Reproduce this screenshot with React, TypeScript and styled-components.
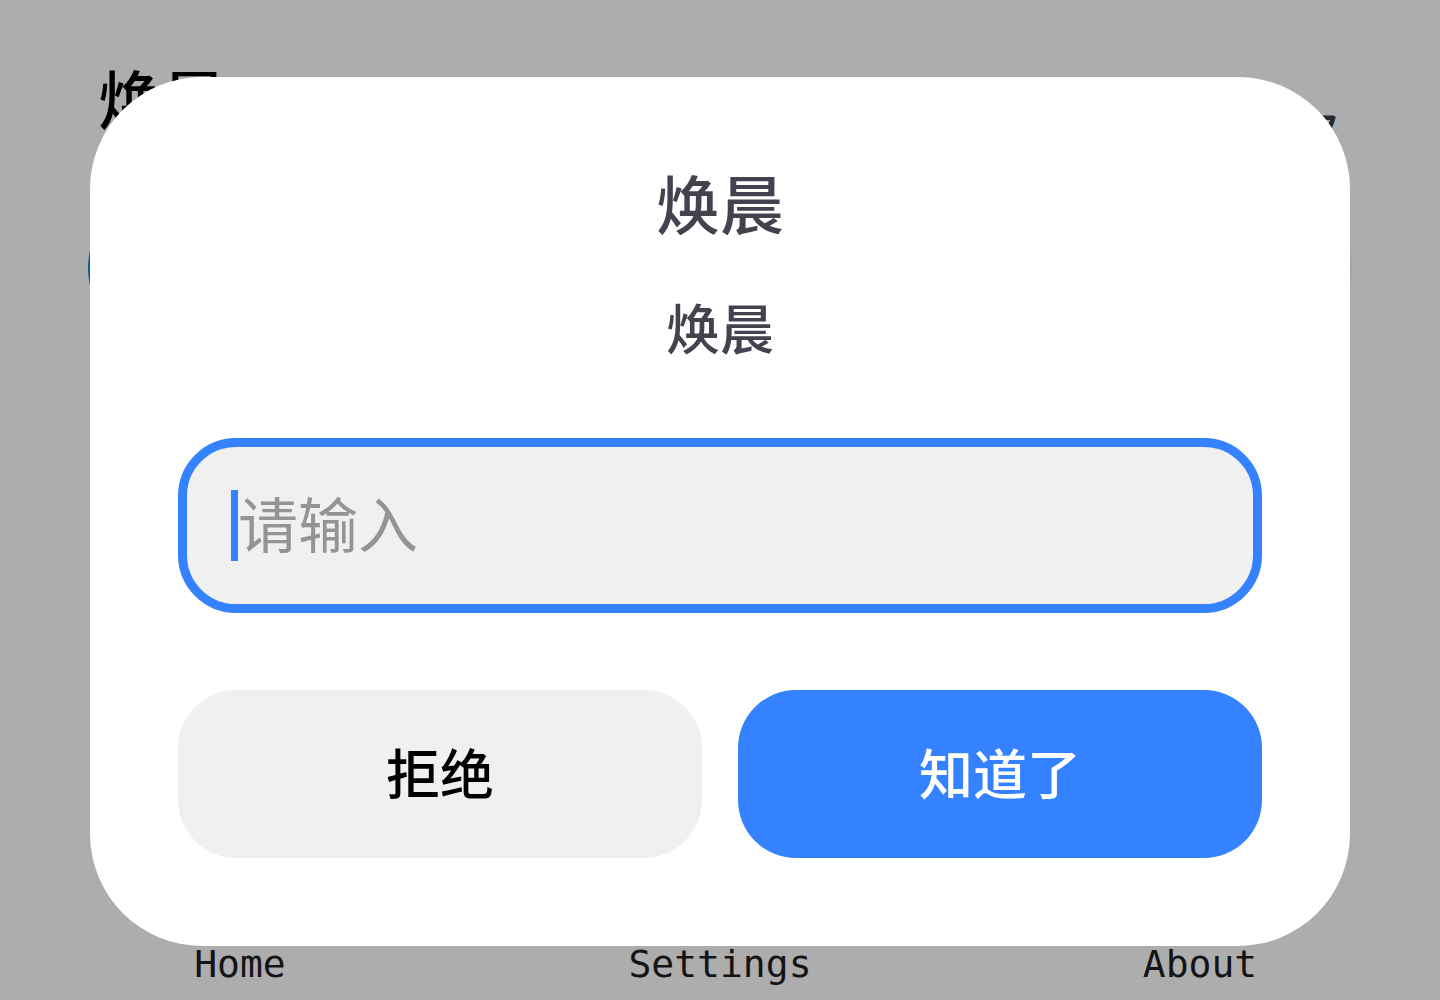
import React, { useState } from "react";
import styled, { createGlobalStyle } from "styled-components";

const GlobalStyle = createGlobalStyle`
  * { box-sizing: border-box; }
  body {
    margin: 0;
    background: #adadad;
    font-family: "Noto Sans CJK SC", sans-serif;
  }
  button, input { font-family: inherit; }
`;

const Page = styled.div`
  min-height: 100vh;
  display: flex;
  flex-direction: column;
`;

const Header = styled.header`
  display: flex;
  justify-content: space-between;
  align-items: flex-start;
  padding: 56px 98px 0;
`;

const Brand = styled.h1`
  margin: 0;
  font-size: 64px;
  line-height: 80px;
  font-weight: 500;
  color: #000;
`;

const Mark = styled.span`
  padding-top: 48px;
  font-size: 48px;
  line-height: 56px;
  font-weight: 500;
  color: #29292f;
`;

const Tiles = styled.div`
  display: flex;
  justify-content: space-between;
  padding: 28px 88px 0;
`;

const Tile = styled.div<{ $tone: string }>`
  width: 160px;
  height: 160px;
  border-radius: 80px;
  background: ${(p) => p.$tone};
`;

const Nav = styled.nav`
  margin-top: auto;
  display: grid;
  grid-template-columns: repeat(3, 1fr);
  padding-bottom: 12px;
`;

const NavLink = styled.a`
  text-align: center;
  font-family: "DejaVu Sans Mono", monospace;
  font-size: 38px;
  line-height: 48px;
  color: #141416;
  text-decoration: none;
`;

const Overlay = styled.div`
  position: fixed;
  inset: 0;
  display: flex;
  align-items: center;
  justify-content: center;
  padding: 23px 90px 0;
`;

const Dialog = styled.form`
  width: 100%;
  padding: 88px;
  border-radius: 112px;
  background: #fff;
  color: #45424f;
  text-align: center;
`;

const Title = styled.h2`
  margin: 0;
  font-size: 64px;
  line-height: 72px;
  font-weight: 500;
`;

const Message = styled.p`
  margin: 54px 0 75px;
  font-size: 54px;
  line-height: 72px;
  font-weight: 500;
`;

const Field = styled.label`
  display: flex;
  align-items: center;
  height: 175px;
  padding: 0 44px;
  border: 9px solid #3482ff;
  border-radius: 58px;
  background: #f0f0f0;
`;

const Caret = styled.span`
  flex: none;
  width: 7px;
  height: 71px;
  background: #3482ff;
`;

const TextInput = styled.input`
  flex: 1;
  min-width: 0;
  height: 104px;
  padding: 0 0 8px;
  border: 0;
  outline: 0;
  background: transparent;
  font-size: 60px;
  color: #000;
  caret-color: #3482ff;
  &::placeholder {
    color: #949494;
    opacity: 1;
  }
`;

const Actions = styled.div`
  display: flex;
  gap: 36px;
  margin-top: 77px;
`;

const Button = styled.button<{ $primary?: boolean }>`
  flex: 1;
  height: 168px;
  padding: 0 0 6px;
  border: 0;
  border-radius: 58px;
  font-size: 54px;
  font-weight: 500;
  cursor: pointer;
  color: ${(p) => (p.$primary ? "#fff" : "#000")};
  background: ${(p) => (p.$primary ? "#3482ff" : "#f0f0f0")};
`;

export default function App() {
  const [value, setValue] = useState("");
  return (
    <>
      <GlobalStyle />
      <Page>
        <Header>
          <Brand>焕晨</Brand>
          <Mark>又</Mark>
        </Header>
        <Tiles>
          <Tile $tone="#0d559f" />
          <Tile $tone="#a3a3a3" />
        </Tiles>
        <Nav>
          <NavLink href="#home">Home</NavLink>
          <NavLink href="#settings">Settings</NavLink>
          <NavLink href="#about">About</NavLink>
        </Nav>
      </Page>
      <Overlay>
        <Dialog
          role="dialog"
          aria-modal="true"
          aria-labelledby="dialog-title"
          onSubmit={(e) => e.preventDefault()}
        >
          <Title id="dialog-title">焕晨</Title>
          <Message>焕晨</Message>
          <Field>
            {value === "" && <Caret />}
            <TextInput
              aria-label="请输入"
              placeholder="请输入"
              value={value}
              onChange={(e) => setValue(e.target.value)}
            />
          </Field>
          <Actions>
            <Button type="button">拒绝</Button>
            <Button type="submit" $primary>
              知道了
            </Button>
          </Actions>
        </Dialog>
      </Overlay>
    </>
  );
}
